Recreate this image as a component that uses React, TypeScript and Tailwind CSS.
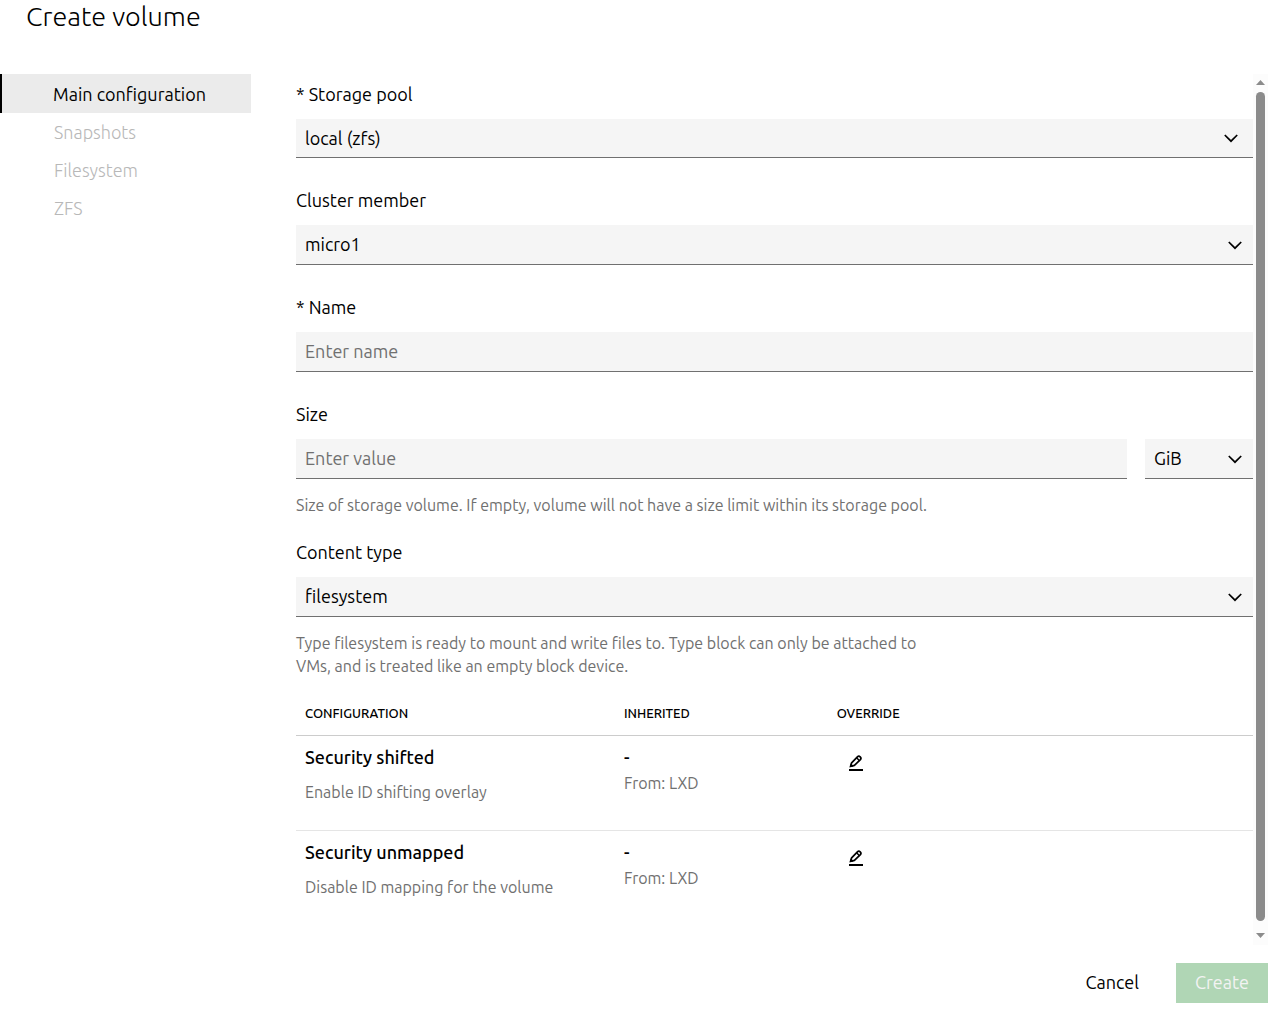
import { useState } from "react";
import clsx from "clsx";

const sections = ["Main configuration", "Snapshots", "Filesystem", "ZFS"];

const rows = [
  { title: "Security shifted", help: "Enable ID shifting overlay" },
  { title: "Security unmapped", help: "Disable ID mapping for the volume" },
];

const fieldClass =
  "w-full appearance-none rounded-none border-b border-[#707070] bg-[#f5f5f5] px-[9px] text-[18px] outline-none placeholder:text-[#707070]";

const helpClass = "text-[16px] leading-[23px] text-[#707070]";

function Chevron() {
  return (
    <svg width="14" height="9" viewBox="0 0 14 9" fill="none" stroke="#000" strokeWidth="1.7">
      <path d="M0.8 1 L7 7.2 L13.2 1" />
    </svg>
  );
}

function EditIcon() {
  return (
    <svg width="16" height="16" viewBox="0 0 16 16" fill="none" stroke="#000">
      <path
        strokeWidth="1.7"
        strokeLinejoin="round"
        d="M2.6 11.2 L3.6 7.8 L9.4 1.8 Q10.8 0.5 12.2 1.8 Q13.6 3.2 12.4 4.6 L6.4 10.4 Z"
      />
      <path strokeWidth="1.5" d="M8.6 2.8 L11.5 5.7" />
      <path fill="#000" stroke="none" d="M1.4 12.6 L2.8 8.6 L5.6 11.4 Z" />
      <path strokeWidth="2" d="M1 15 H15" />
    </svg>
  );
}

type SelectProps = {
  id: string;
  options: string[];
  label?: string;
  className?: string;
  heightClass?: string;
  chevronClass?: string;
};

function Select({
  id,
  options,
  label,
  className,
  heightClass = "h-10",
  chevronClass = "right-[11px]",
}: SelectProps) {
  return (
    <div className={clsx("relative", className)}>
      <select id={id} aria-label={label} className={clsx(fieldClass, "block", heightClass)}>
        {options.map((option) => (
          <option key={option}>{option}</option>
        ))}
      </select>
      <span className={clsx("pointer-events-none absolute inset-y-0 flex items-center", chevronClass)}>
        <Chevron />
      </span>
    </div>
  );
}

function Label({ htmlFor, children }: { htmlFor: string; children: React.ReactNode }) {
  return (
    <label htmlFor={htmlFor} className="mb-[13px] block leading-6">
      {children}
    </label>
  );
}

export default function App() {
  const [active, setActive] = useState(sections[0]);
  const [name, setName] = useState("");
  const [size, setSize] = useState("");

  return (
    <div className="flex min-h-screen flex-col bg-white font-['Ubuntu','Noto_Sans',sans-serif] text-[18px] text-black">
      <header className="h-[74px] pl-[26px]">
        <h1 className="text-[27px] leading-8 font-light">Create volume</h1>
      </header>

      <main className="flex flex-1">
        <nav className="w-[251px] shrink-0">
          {sections.map((section) => (
            <button
              key={section}
              type="button"
              disabled={!name && section !== sections[0]}
              onClick={() => setActive(section)}
              className={clsx(
                "block w-full border-l-2 text-left",
                section === active
                  ? "h-[39px] border-black bg-[#ebebeb] pt-px pl-[51px]"
                  : "h-[38px] border-transparent pl-[52px] font-light text-[#b8b8b8]"
              )}
            >
              {section}
            </button>
          ))}
        </nav>

        <form id="volume" className="ml-[45px] min-w-0 flex-1 pt-2">
          <div className="mb-[30px]">
            <Label htmlFor="pool">* Storage pool</Label>
            <Select
              id="pool"
              options={["local (zfs)"]}
              heightClass="h-[39px]"
              chevronClass="right-[15px]"
            />
          </div>
          <div className="mb-[30px]">
            <Label htmlFor="member">Cluster member</Label>
            <Select id="member" options={["micro1"]} />
          </div>
          <div className="mb-[30px]">
            <Label htmlFor="name">* Name</Label>
            <input
              id="name"
              type="text"
              placeholder="Enter name"
              value={name}
              onChange={(e) => setName(e.target.value)}
              className={clsx(fieldClass, "block h-10 pb-px")}
            />
          </div>
          <div className="mb-[23px]">
            <Label htmlFor="size">Size</Label>
            <div className="flex gap-[18px]">
              <input
                id="size"
                type="text"
                placeholder="Enter value"
                value={size}
                onChange={(e) => setSize(e.target.value)}
                className={clsx(fieldClass, "h-10 pb-px")}
              />
              <Select id="unit" label="Unit" options={["GiB", "MiB", "TiB"]} className="w-[108px] shrink-0" />
            </div>
            <p className={clsx(helpClass, "mt-[15px]")}>
              Size of storage volume. If empty, volume will not have a size limit within its storage pool.
            </p>
          </div>
          <div className="mb-[14px]">
            <Label htmlFor="content">Content type</Label>
            <Select id="content" options={["filesystem", "block"]} />
            <p className={clsx(helpClass, "mt-[15px] max-w-[640px]")}>
              Type filesystem is ready to mount and write files to. Type block can only be attached to
              VMs, and is treated like an empty block device.
            </p>
          </div>

          <table className="w-full table-fixed text-left">
            <thead>
              <tr className="h-[43px] border-b border-[#cccccc] text-[13px]">
                <th className="w-3/9 px-[9px] font-[550]">CONFIGURATION</th>
                <th className="w-2/9 px-[9px] font-[550]">INHERITED</th>
                <th className="w-4/9 px-[9px] font-[550]">OVERRIDE</th>
              </tr>
            </thead>
            <tbody>
              {rows.map((row) => (
                <tr key={row.title} className="h-[95px] border-b border-[#e5e5e5] align-top last:border-b-0">
                  <td className="px-[9px] pt-[9px]">
                    <div className="leading-6 font-[550]">{row.title}</div>
                    <div className={clsx(helpClass, "mt-3")}>{row.help}</div>
                  </td>
                  <td className="px-[9px] pt-[9px]">
                    <div className="leading-6 font-[550]">-</div>
                    <div className={clsx(helpClass, "mt-[3px]")}>From: LXD</div>
                  </td>
                  <td className="px-[9px] pt-2">
                    <button type="button" aria-label={`Edit ${row.title}`} className="block p-[11px]">
                      <EditIcon />
                    </button>
                  </td>
                </tr>
              ))}
            </tbody>
          </table>
        </form>

        <div className="mr-[10px] flex w-[15px] shrink-0 flex-col items-center bg-[#fcfcfc] pt-[6px] pb-[7px]">
          <svg width="9" height="5" viewBox="0 0 9 5" fill="#8b8b8b">
            <path d="M0 5 L4.5 0 L9 5 Z" />
          </svg>
          <div className="mt-[7px] mb-3 w-[9px] flex-1 rounded-full bg-[#8b8b8b]" />
          <svg width="9" height="5" viewBox="0 0 9 5" fill="#8b8b8b">
            <path d="M0 0 L4.5 5 L9 0 Z" />
          </svg>
        </div>
      </main>

      <footer className="flex justify-end gap-[18px] pt-[18px] pr-[10px] pb-2">
        <button type="button" className="h-10 px-[19px] pb-px">
          Cancel
        </button>
        <button
          type="submit"
          form="volume"
          disabled={!name}
          className="h-10 w-[92px] bg-[#0e8420] pb-px text-white disabled:bg-[#b0d6b5] disabled:text-[#f3f3f3]"
        >
          Create
        </button>
      </footer>
    </div>
  );
}
